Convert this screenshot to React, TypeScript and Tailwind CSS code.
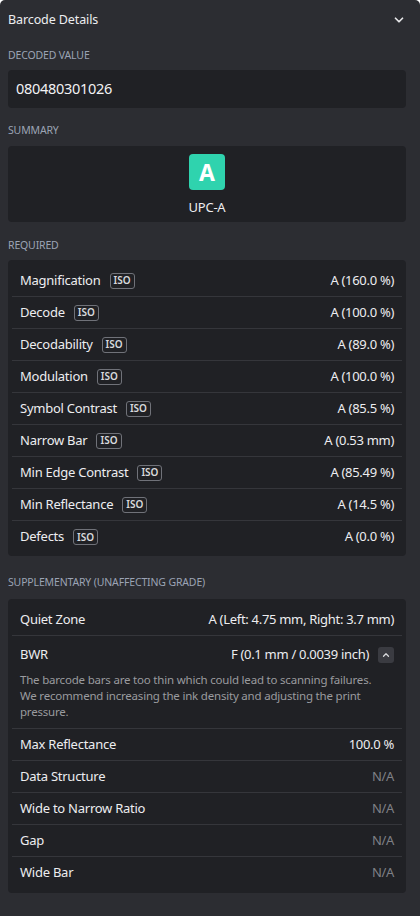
import React from 'react';
import { ChevronDown, ChevronUp } from 'lucide-react';

interface Metric {
  name: string;
  value: string;
  iso?: boolean;
  muted?: boolean;
}

const required: Metric[] = [
  { name: 'Magnification', value: 'A (160.0 %)', iso: true },
  { name: 'Decode', value: 'A (100.0 %)', iso: true },
  { name: 'Decodability', value: 'A (89.0 %)', iso: true },
  { name: 'Modulation', value: 'A (100.0 %)', iso: true },
  { name: 'Symbol Contrast', value: 'A (85.5 %)', iso: true },
  { name: 'Narrow Bar', value: 'A (0.53 mm)', iso: true },
  { name: 'Min Edge Contrast', value: 'A (85.49 %)', iso: true },
  { name: 'Min Reflectance', value: 'A (14.5 %)', iso: true },
  { name: 'Defects', value: 'A (0.0 %)', iso: true },
];

const supplementaryTail: Metric[] = [
  { name: 'Max Reflectance', value: '100.0 %' },
  { name: 'Data Structure', value: 'N/A', muted: true },
  { name: 'Wide to Narrow Ratio', value: 'N/A', muted: true },
  { name: 'Gap', value: 'N/A', muted: true },
  { name: 'Wide Bar', value: 'N/A', muted: true },
];

function Row({ m }: { m: Metric }) {
  return (
    <div className="h-8 flex items-center justify-between px-2">
      <div className="flex items-center gap-[9px]">
        <span className="text-[13px] tracking-[-0.25px] text-[#ededf0]">{m.name}</span>
        {m.iso && (
          <span className="h-4 px-[3px] flex items-center rounded-[3px] border border-[#707279] text-[10px] font-semibold text-[#d8d9dc]">
            ISO
          </span>
        )}
      </div>
      <span className={`text-[13px] tracking-[-0.3px] ${m.muted ? 'text-[#7f8086]' : 'text-[#ededf0]'}`}>{m.value}</span>
    </div>
  );
}

export default function App() {
  return (
    <div
      className="min-h-screen bg-[#2c2d32] rounded-t-[5px] pl-2 pr-[14px] pb-6"
      style={{ fontFamily: '"Noto Sans", "Open Sans", sans-serif' }}
    >
      <div className="h-10 flex items-center justify-between">
        <span className="text-[12.5px] tracking-[-0.1px] text-[#ededf0]">Barcode Details</span>
        <ChevronDown size={14} strokeWidth={3} className="text-[#e6e6e8]" />
      </div>

      <div className="pt-[7px] pb-[7px] text-[10.5px] leading-4 tracking-[-0.15px] uppercase text-[#9ba3b4]">Decoded Value</div>
      <div className="h-[38px] rounded-[4px] bg-[#202125] flex items-center px-2 text-[14.5px] tracking-[-0.3px] text-[#f2f2f4]">
        080480301026
      </div>

      <div className="pt-[14px] pb-[8px] text-[10.5px] leading-4 tracking-[-0.15px] uppercase text-[#9ba3b4]">Summary</div>
      <div className="h-[76px] rounded-[4px] bg-[#202125] flex flex-col items-center pt-2">
        <div className="w-9 h-9 rounded-[4px] bg-[#2fd3ae] flex items-center justify-center text-[23px] font-bold text-white">
          A
        </div>
        <div className="mt-[9px] text-[13px] leading-4 tracking-[-0.25px] text-[#ededf0]">UPC-A</div>
      </div>

      <div className="pt-[15px] pb-[7px] text-[10.5px] leading-4 tracking-[-0.15px] uppercase text-[#9ba3b4]">Required</div>
      <div className="rounded-[4px] bg-[#202125] px-1 pt-[5px] pb-[3px] divide-y divide-[#35363b]">
        {required.map((m) => (
          <Row key={m.name} m={m} />
        ))}
      </div>

      <div className="pt-[18px] pb-[9px] text-[10.5px] leading-4 tracking-[-0.15px] uppercase text-[#9ba3b4]">
        Supplementary (Unaffecting grade)
      </div>
      <div className="rounded-[4px] bg-[#202125] px-1 pt-[5px] pb-1 divide-y divide-[#35363b]">
        <Row m={{ name: 'Quiet Zone', value: 'A (Left: 4.75 mm, Right: 3.7 mm)' }} />
        <div className="px-2 pt-[9px] pb-2">
          <div className="h-5 flex items-center justify-between">
            <span className="text-[13px] tracking-[-0.25px] text-[#ededf0]">BWR</span>
            <div className="flex items-center gap-[9px]">
              <span className="text-[13px] tracking-[-0.3px] text-[#ededf0]">F (0.1 mm / 0.0039 inch)</span>
              <button className="w-4 h-4 rounded-[3px] bg-[#3a3b41] flex items-center justify-center">
                <ChevronUp size={10} strokeWidth={3} className="text-[#d8d9dc]" />
              </button>
            </div>
          </div>
          <p className="mt-[7px] max-w-[362px] text-[11.5px] leading-4 tracking-[-0.2px] text-[#9a9b9f]">
            The barcode bars are too thin which could lead to scanning failures. We recommend increasing the ink density and adjusting the print pressure.
          </p>
        </div>
        {supplementaryTail.map((m) => (
          <Row key={m.name} m={m} />
        ))}
      </div>
    </div>
  );
}
